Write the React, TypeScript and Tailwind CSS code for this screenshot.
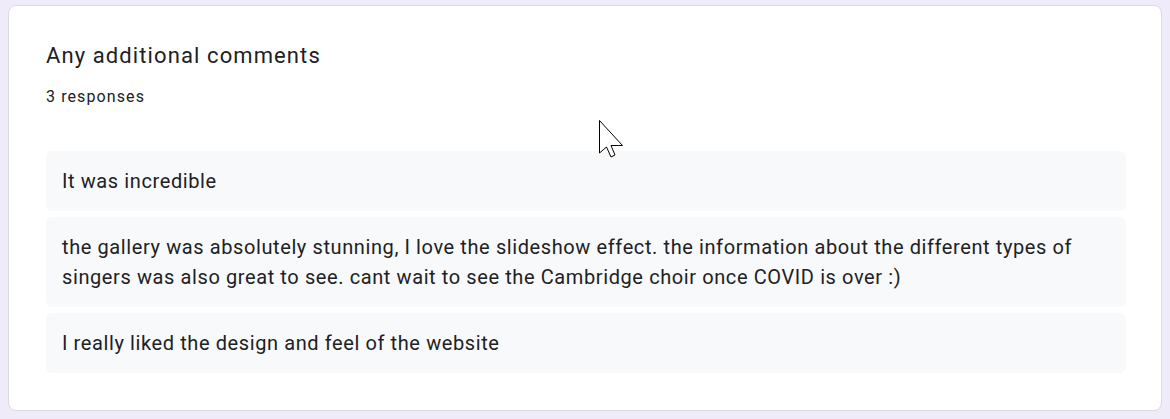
const responses = [
  "It was incredible",
  "the gallery was absolutely stunning, I love the slideshow effect. the information about the different types of singers was also great to see. cant wait to see the Cambridge choir once COVID is over :)",
  "I really liked the design and feel of the website",
];

function Cursor() {
  return (
    <svg
      className="absolute left-[599px] top-[120px]"
      width="26"
      height="40"
      viewBox="0 0 26 40"
    >
      <path
        d="M0.5 0.5 L0.5 33 L7.5 27 L12 37 L16 35 L12 25.5 L23.5 25.5 Z"
        fill="#fff"
        stroke="#000"
        strokeWidth="1"
        strokeLinejoin="miter"
      />
    </svg>
  );
}

export default function App() {
  return (
    <div className="relative min-h-[419px] w-[1170px] bg-[#f0ebf8] pt-[5px] pb-[10px] font-['Roboto',sans-serif] text-[#202124]">
      <div className="mx-2 rounded-lg border border-[#dadce0] bg-white pl-[37px] pr-[35px] pt-[34px] pb-[37px]">
        <h2 className="text-[22px] leading-[32px] font-normal tracking-[1.1px]">Any additional comments</h2>
        <p className="mt-[15px] text-[16px] leading-[20px] tracking-[1.1px]">3 responses</p>
        <div className="mt-[44px] flex flex-col gap-[6px]">
          {responses.map((r) => (
            <div key={r} className="rounded-[6px] bg-[#f8f9fa] px-4 py-[15px] text-[20px] leading-[30px] tracking-[0.6px]">
              {r}
            </div>
          ))}
        </div>
      </div>
      <Cursor />
    </div>
  );
}
